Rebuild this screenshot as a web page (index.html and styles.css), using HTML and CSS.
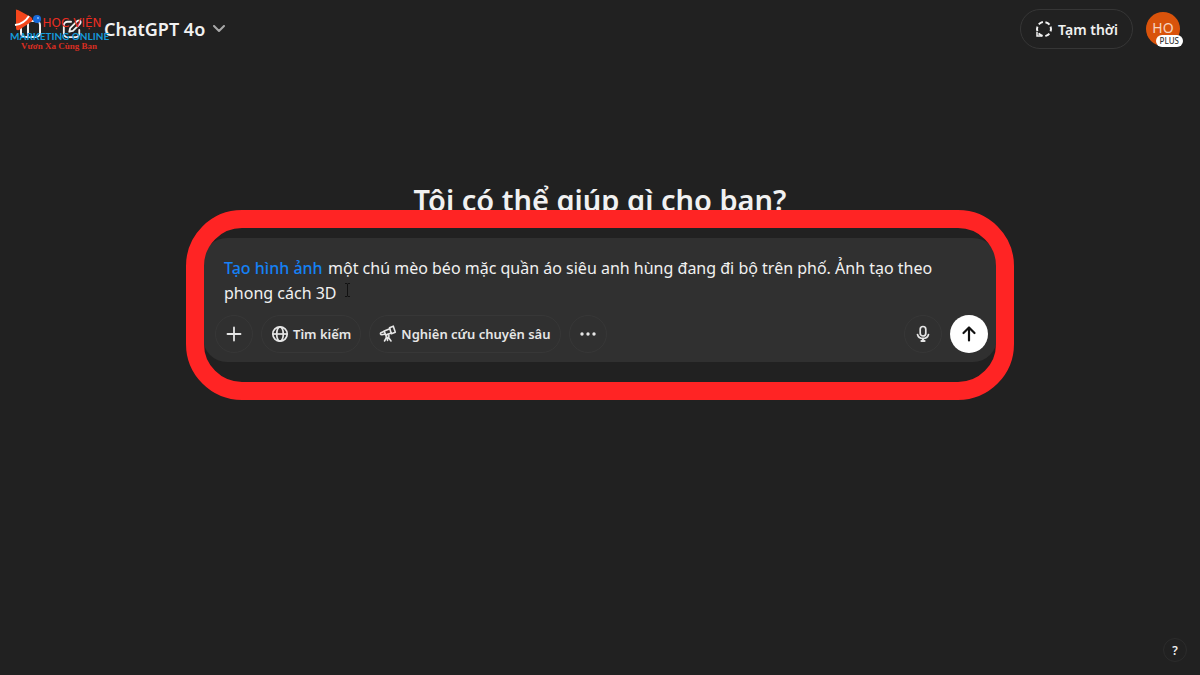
FILE: index.html
```html
<!DOCTYPE html>
<html lang="vi">
<head>
<meta charset="utf-8">
<meta name="viewport" content="width=device-width, initial-scale=1">
<title>ChatGPT 4o</title>
<link rel="stylesheet" href="styles.css">
</head>
<body>
<header class="topbar">
  <nav class="topbar-left">
    <button class="icon-button" type="button" aria-label="Mở thanh bên">
      <svg width="22" height="20" viewBox="0 0 22 20" fill="none" stroke="currentColor" stroke-width="2"><rect x="1" y="2" width="19" height="16" rx="4"/><path d="M8 2v16"/></svg>
    </button>
    <button class="icon-button" type="button" aria-label="Cuộc trò chuyện mới">
      <svg width="20" height="20" viewBox="0 0 22 22" fill="none" stroke="currentColor" stroke-width="2" stroke-linecap="round" stroke-linejoin="round"><path d="M10 3H6a4 4 0 0 0-4 4v9a4 4 0 0 0 4 4h9a4 4 0 0 0 4-4v-4"/><path d="M8 14l1-4 8-8q2-1 3 0t0 3l-8 8z"/></svg>
    </button>
    <button class="model" type="button">ChatGPT 4o
      <svg class="chevron" width="12" height="8" viewBox="0 0 12 8" fill="none" stroke="currentColor" stroke-width="2" stroke-linecap="round" stroke-linejoin="round"><path d="M1 1l5 5 5-5"/></svg>
    </button>
    <div class="watermark">
      <svg class="watermark-mark" width="30" height="24" viewBox="0 0 30 24"><path d="M2 1Q1 0 4 1L17 8q3 3 0 5L5 21q-3 1-3-2z" fill="#f4461c"/><path d="M1 16q9-1 14-9" fill="none" stroke="#fff" stroke-width="2"/><circle cx="23" cy="10" r="4" fill="#1769d8"/><circle cx="24" cy="9" r="1" fill="#8dc0ff"/></svg>
      <span class="watermark-title">HỌC VIỆN</span>
      <span class="watermark-sub">MARKETING ONLINE</span>
      <span class="watermark-tag">Vươn Xa Cùng Bạn</span>
    </div>
  </nav>
  <div class="topbar-right">
    <button class="temporary" type="button">
      <svg width="18" height="18" viewBox="0 0 18 18" fill="none" stroke="currentColor" stroke-width="2"><circle cx="9" cy="9" r="7" stroke-dasharray="4.8 2.53" transform="rotate(-20 9 9)"/><path d="M2 12v4h5" stroke-width="1.5"/></svg>
      Tạm thời
    </button>
    <button class="avatar" type="button" aria-label="Tài khoản"><span class="initials">HO</span><span class="plan">PLUS</span></button>
  </div>
</header>

<main class="main">
  <h1 class="title">Tôi có thể giúp gì cho bạn?</h1>
  <div class="stage">
    <form class="composer">
      <div class="prompt">
        <label class="prompt-mode" for="prompt">Tạo hình ảnh</label>
        <textarea class="prompt-text" id="prompt" rows="2" spellcheck="false">một chú mèo béo mặc quần áo siêu anh hùng đang đi bộ trên phố. Ảnh tạo theo phong cách 3D</textarea>
        <svg class="caret" width="7" height="14" viewBox="0 0 7 14" fill="none" stroke="#111" stroke-width="1"><path d="M1 .5h2l.5.5.5-.5h2M3.500 1v12M1 13.500h2l.5-.5.5.5h2"/></svg>
      </div>
      <div class="tools">
        <button class="pill round" type="button" aria-label="Thêm">
          <svg width="16" height="16" viewBox="0 0 16 16" fill="none" stroke="currentColor" stroke-width="1.800" stroke-linecap="round"><path d="M8 1.500v13M1.500 8h13"/></svg>
        </button>
        <button class="pill" type="button">
          <svg width="18" height="18" viewBox="0 0 18 18" fill="none" stroke="currentColor" stroke-width="1.700"><circle cx="9" cy="9" r="7.200"/><ellipse cx="9" cy="9" rx="3.300" ry="7.200"/><path d="M2 9h14"/></svg>
          Tìm kiếm
        </button>
        <button class="pill" type="button">
          <svg width="18" height="18" viewBox="0 0 18 18" fill="none" stroke="currentColor" stroke-width="1.600" stroke-linecap="round" stroke-linejoin="round"><path d="M10.500 2.800l3.800-1.600 2 6-3.900 1.500z"/><path d="M10.800 3.800L5.300 6l1.200 4 5.900-2"/><path d="M5.300 6.300L2 7.700q-.8.500-.5 1.300t1.300.8l3.500-.8"/><circle cx="8.500" cy="11" r="1.500"/><path d="M7.500 12.500L5.500 16M9.500 12.500l2.500 3.500M8.500 13v2.500"/></svg>
          Nghiên cứu chuyên sâu
        </button>
        <button class="pill round" type="button" aria-label="Thêm công cụ">
          <svg width="18" height="6" viewBox="0 0 18 6" fill="currentColor"><circle cx="3" cy="3" r="1.700"/><circle cx="9" cy="3" r="1.700"/><circle cx="15" cy="3" r="1.700"/></svg>
        </button>
        <span class="spacer"></span>
        <button class="pill round" type="button" aria-label="Đọc chính tả">
          <svg width="14" height="18" viewBox="0 0 14 18" fill="none" stroke="currentColor" stroke-width="1.700" stroke-linecap="round"><rect x="4.200" y="1.500" width="5.600" height="9.500" rx="2.800"/><path d="M1.500 9.500q1 4 5.500 4t5.500-4"/><path d="M7 13.500v2.500M5.500 16h3" stroke-width="2.200"/></svg>
        </button>
        <button class="send" type="submit" aria-label="Gửi">
          <svg width="16" height="18" viewBox="0 0 16 18" fill="none" stroke="currentColor" stroke-width="2.200" stroke-linecap="round" stroke-linejoin="round"><path d="M8 15.500V2.500M2.500 8L8 2.500 13.500 8"/></svg>
        </button>
      </div>
    </form>
    <div class="highlight"></div>
  </div>
</main>

<button class="help" type="button" aria-label="Trợ giúp">?</button>
</body>
</html>
```
FILE: styles.css
```css
* { box-sizing: border-box; }
body {
  margin: 0;
  min-height: 100vh;
  display: flex;
  flex-direction: column;
  background: #212121;
  color: #f1f1f1;
  font-family: "Noto Sans", "Open Sans", sans-serif;
  font-size: 16px;
}
button {
  margin: 0;
  padding: 0;
  border: 0;
  background: none;
  color: inherit;
  font: inherit;
  cursor: pointer;
}
svg { flex: none; display: block; }

.topbar {
  display: flex;
  align-items: center;
  justify-content: space-between;
  height: 58px;
  padding: 0 20px;
}
.topbar-left {
  position: relative;
  display: flex;
  align-items: center;
}
.icon-button {
  display: flex;
  align-items: center;
  width: 42px;
  height: 40px;
}
.model {
  display: flex;
  align-items: center;
  gap: 8px;
  font-size: 18px;
  font-weight: 600;
}
.chevron { color: #a8a8a8; }

.watermark {
  position: absolute;
  left: -10px;
  top: 0;
  width: 98px;
  text-align: center;
  white-space: nowrap;
  pointer-events: none;
}
.watermark-mark { position: absolute; left: 4px; top: 0; }
.watermark-title,
.watermark-sub,
.watermark-tag { display: block; line-height: 10px; }
.watermark-title {
  padding: 9px 0 3px 26px;
  font-family: "DejaVu Sans", sans-serif;
  font-size: 12px;
  color: #e92d22;
}
.watermark-sub {
  font-family: Lato, sans-serif;
  font-size: 10px;
  font-weight: 700;
  color: #159bdc;
}
.watermark-tag {
  font-family: "Liberation Serif", serif;
  font-size: 9px;
  font-weight: 700;
  color: #d92e22;
}

.topbar-right {
  display: flex;
  align-items: center;
  gap: 13px;
}
.temporary {
  display: flex;
  align-items: center;
  gap: 5px;
  height: 40px;
  padding: 0 14px;
  border: 1px solid #363636;
  border-radius: 20px;
  font-size: 14px;
  font-weight: 600;
}
.avatar {
  position: relative;
  width: 34px;
  height: 34px;
  border-radius: 50%;
  background: #d9530b;
  color: #f6d5c0;
  font-size: 14px;
}
.initials {
  display: block;
  padding-bottom: 2px;
  line-height: 20px;
}
.plan {
  position: absolute;
  right: -3px;
  bottom: -1px;
  padding: 0 4px;
  border-radius: 6px;
  background: #fff;
  color: #333;
  font-size: 8px;
  line-height: 12px;
  font-weight: 500;
}

.main {
  flex: 1;
  display: flex;
  flex-direction: column;
  align-items: center;
  padding: 120px 24px 0;
}
.title {
  margin: 0 0 16px;
  font-size: 29px;
  line-height: 44px;
  font-weight: 600;
  text-align: center;
}
.stage {
  position: relative;
  width: 100%;
  max-width: 794px;
}
.composer {
  padding: 18px 9px 9px 12px;
  border-radius: 24px;
  background: #303030;
}
.prompt {
  position: relative;
  padding: 0 9px;
  font-size: 16px;
  line-height: 25px;
}
.prompt-mode {
  position: absolute;
  left: 9px;
  top: 0;
  color: #1581f5;
  font-weight: 500;
}
.prompt-text {
  display: block;
  width: 100%;
  padding: 0;
  border: 0;
  outline: 0;
  resize: none;
  overflow: hidden;
  background: none;
  color: #f1f1f1;
  font: inherit;
  text-indent: 104px;
}
.caret { position: absolute; left: 129px; top: 27px; }

.tools {
  display: flex;
  align-items: center;
  gap: 8px;
  margin-top: 9px;
}
.pill {
  display: flex;
  align-items: center;
  justify-content: center;
  gap: 4px;
  height: 38px;
  padding: 0 9px;
  border: 1px solid #373737;
  border-radius: 19px;
  color: #e6e6e6;
  font-size: 13px;
  font-weight: 600;
  white-space: nowrap;
}
.round { width: 38px; padding: 0; }
.spacer { flex: 1; }
.send {
  display: flex;
  align-items: center;
  justify-content: center;
  width: 38px;
  height: 38px;
  border-radius: 50%;
  background: #fff;
  color: #111;
}
.highlight {
  position: absolute;
  inset: -28px -17px -38px;
  border: 18px solid #ff2424;
  border-radius: 56px;
  pointer-events: none;
}

.help {
  align-self: flex-end;
  width: 24px;
  height: 24px;
  margin: 0 13px 13px 0;
  border: 1px solid #2c2c2c;
  border-radius: 50%;
  font-size: 12px;
  font-weight: 600;
}
```
